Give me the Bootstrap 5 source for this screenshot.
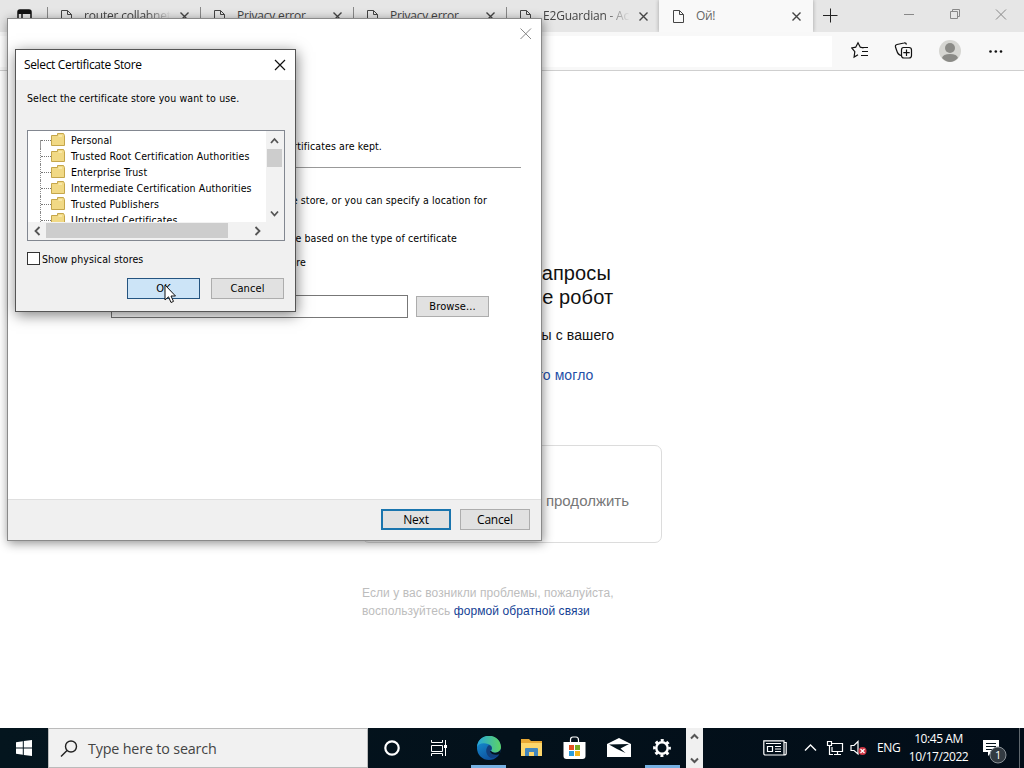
<!DOCTYPE html>
<html lang="en">
<head>
    <meta charset="utf-8">
    <title>Certificate Import Wizard</title>
    <meta name="viewport" content="width=device-width, initial-scale=1">
    <link href="https://cdn.jsdelivr.net/npm/bootstrap@5.3.0/dist/css/bootstrap.min.css" rel="stylesheet">
    <script src="https://cdn.jsdelivr.net/npm/bootstrap@5.3.0/dist/js/bootstrap.bundle.min.js"></script>
    <style>
        body {
            width: 1024px;
            height: 768px;
            font-family: "Open Sans", "Noto Sans", sans-serif;
            font-size: 12px;
            line-height: 16px;
            color: #111;
        }
        svg {
            display: block;
            flex: none;
            fill: none;
        }
        svg:not([stroke]) {
            stroke: currentColor;
        }
        /* browser */
        .tab-strip {
            height: 32px;
            background: #e6e6e6;
        }
        .tab-menu {
            width: 47px;
            padding: 9px 0 0 17px;
        }
        .edge-tab {
            width: 153px;
            height: 32px;
            padding: 0 10px 0 13px;
            color: #444;
            position: relative;
        }
        .edge-tab::before {
            content: "";
            position: absolute;
            left: 0;
            top: 7px;
            height: 17px;
            border-left: 1px solid #888;
        }
        .edge-tab .tab-label {
            width: 87px;
            margin-left: 11px;
            overflow: hidden;
            white-space: nowrap;
            letter-spacing: -.2px;
        }
        .faded {
            -webkit-mask-image: linear-gradient(90deg, #000 70%, transparent);
            mask-image: linear-gradient(90deg, #000 70%, transparent);
        }
        .edge-tab.open {
            width: 154px;
            background: #f9f9f9;
            box-shadow: 0 0 4px rgba(0, 0, 0, .3);
            clip-path: inset(0 -4px 0 -4px);
            padding-right: 11px;
        }
        .edge-tab.open::before {
            display: none;
        }
        .edge-tab.open .tab-label {
            color: #666;
            letter-spacing: -.4px;
        }
        .edge-toolbar {
            height: 39px;
            background: #f8f8f8;
            border-bottom: 1px solid #cfcfcf;
            padding-right: 21px;
        }
        .address-box {
            width: 832px;
            height: 31px;
            background: #fff;
        }
        .caption-icons {
            color: #888;
        }
        /* page */
        .captcha-page {
            height: 657px;
            background: #fff;
            font-family: "Liberation Sans", Arial, sans-serif;
            padding-left: 362px;
        }
        .captcha-col {
            width: 300px;
            padding-top: 190px;
        }
        .captcha-title {
            font-size: 20px;
            line-height: 24px;
            margin: 0 0 16px;
            font-weight: 400;
            letter-spacing: .13px;
            white-space: nowrap;
        }
        .captcha-text {
            font-size: 14px;
            line-height: 20px;
            height: 80px;
            margin: 0 0 40px;
            letter-spacing: .1px;
            white-space: nowrap;
        }
        .captcha-page a {
            color: #1f4fa8;
            text-decoration: none;
        }
        .captcha-box {
            height: 98px;
            border: 1px solid #dcdcdc;
            border-radius: 7px;
            font-size: 15px;
            color: #777;
            padding: 14px 32px 0 0;
        }
        .captcha-help {
            font-size: 12px;
            line-height: 18px;
            color: #bdbdbd;
            margin: 41px 0 0;
            letter-spacing: .07px;
            white-space: nowrap;
        }
        .captcha-page .captcha-help a {
            color: #153f95;
        }
        /* windows */
        .win {
            position: absolute;
            border: 1px solid #8a8a8a;
            font-family: "DejaVu Sans Condensed", "DejaVu Sans", sans-serif;
            font-stretch: condensed;
            font-size: 10.5px;
            line-height: 16px;
            letter-spacing: .12px;
            color: #000;
        }
        .win-wizard {
            left: 7px;
            top: 18px;
            width: 535px;
            height: 523px;
            background: #fff;
            box-shadow: 1px 2px 10px rgba(0, 0, 0, .45);
        }
        .win-store {
            left: 15px;
            top: 49px;
            width: 281px;
            height: 263px;
            background: #f0f0f0;
            border-color: #555;
            box-shadow: 1px 3px 13px rgba(0, 0, 0, .5);
        }
        .wizard-body {
            height: 480px;
        }
        .wizard-line {
            text-align: right;
            white-space: nowrap;
        }
        .line-kept {
            width: 374px;
            margin-top: 95px;
        }
        .wizard-rule {
            width: 491px;
            margin: 13px 0 24px 22px;
            border-top: 1px solid #999;
        }
        .line-store {
            width: 479px;
        }
        .line-auto {
            width: 449px;
            margin-top: 22px;
        }
        .line-place {
            width: 298px;
            margin-top: 8px;
        }
        .store-field {
            margin-top: 25px;
        }
        .store-input {
            width: 297px;
            height: 23px;
            margin-right: 8px;
            border: 1px solid #777;
            background: #fff;
        }
        .wizard-foot {
            height: 41px;
            background: #f0f0f0;
            border-top: 1px solid #dfdfdf;
            padding: 0 11px 1px 0;
            gap: 9px;
        }
        .win-btn {
            width: 73px;
            height: 21px;
            padding: 1px 0 0;
            border: 1px solid #adadad;
            background: #e1e1e1;
            color: #000;
            font-size: 11px;
            letter-spacing: .1px;
            line-height: 18px;
        }
        .wizard-foot .win-btn {
            width: 70px;
            font-family: "Open Sans", sans-serif;
            font-stretch: normal;
            font-size: 12px;
            letter-spacing: -.2px;
            padding: 0;
            line-height: 19px;
        }
        .wizard-foot .win-btn.next {
            border: 2px solid #1a75ae;
            line-height: 17px;
        }
        .win-btn.hot {
            background: #cce4f7;
            border-color: #245480;
            margin-right: 11px;
        }
        .store-title {
            height: 30px;
            background: #fff;
            font-family: "Open Sans", sans-serif;
            font-stretch: normal;
            font-size: 12px;
            letter-spacing: -.35px;
            padding: 0 9px 0 8px;
        }
        .store-body {
            padding: 10px 10px 0 11px;
        }
        .tree-box {
            height: 111px;
            margin-top: 24px;
            border: 1px solid #828790;
            background: #fff;
        }
        .tree-list {
            width: 238px;
            height: 91px;
            overflow: hidden;
            padding: 1px 0 0 12px;
        }
        .tree-row {
            height: 16px;
            white-space: nowrap;
            border-left: 1px dotted #888;
        }
        .tree-row:first-child {
            border-image: linear-gradient(transparent 50%, #999 50%) 1;
        }
        .tree-row::before {
            content: "";
            width: 10px;
            flex: none;
            border-top: 1px dotted #777;
        }
        .tree-row svg {
            margin-right: 6px;
        }
        .vbar {
            width: 18px;
            height: 91px;
            background: #f2f2f2;
            padding: 0 2px 0 0;
        }
        .vthumb {
            width: 15px;
            height: 18px;
            background: #cdcdcd;
        }
        .hbar {
            height: 18px;
            background: #f2f2f2;
            padding: 1px 0 0 1px;
        }
        .hthumb {
            width: 182px;
            height: 15px;
            background: #cdcdcd;
        }
        .show-physical {
            margin-top: 10px;
        }
        .tick-box {
            width: 13px;
            height: 13px;
            margin: 0 2px 2px 0;
            border: 1px solid #333;
            background: #fff;
        }
        .store-actions {
            margin-top: 11px;
            padding-right: 1px;
        }
        .mouse-pointer {
            position: absolute;
            left: 164px;
            top: 284px;
        }
        /* taskbar */
        .taskbar {
            height: 40px;
            background: linear-gradient(90deg, #04151e, #020d18);
            color: #fff;
        }
        .start-btn {
            width: 48px;
            flex: none;
        }
        .search-box {
            width: 320px;
            flex: none;
            background: #f1f1f1;
            border: 1px solid #bbb;
            font-size: 14.3px;
            letter-spacing: -.16px;
            color: #444;
            padding: 1px 0 0 11px;
        }
        .search-box svg {
            margin-right: 8px;
        }
        .task-list {
            padding-left: 2.3px;
        }
        .task-item {
            width: 43.4px;
            height: 40px;
            border-bottom: 3px solid transparent;
            padding-top: 2px;
            flex: none;
        }
        .task-item.running {
            width: 35px;
            margin: 0 4.2px;
            border-color: #76b0e2;
        }
        .task-item.browser {
            margin-left: 10px;
        }
        .bar-scroll {
            width: 17px;
            flex: none;
            background: #f0f0f0;
            color: #555;
            padding: 5px 0 4px;
        }
        .tray {
            padding-left: 60px;
            width: 316px;
            flex: none;
        }
        .lang-label {
            margin-left: 2px;
            letter-spacing: -.3px;
        }
        .clock {
            width: 64px;
            margin-left: 6px;
            line-height: 18px;
            letter-spacing: -.42px;
            white-space: nowrap;
        }
        .tray-end {
            border-left: 1px solid #60686e;
            width: 5px;
        }
    </style>
</head>
<body class="position-relative overflow-hidden">

    <div class="tab-strip d-flex">
        <div class="tab-menu"><svg width="16" height="15" stroke-width="1.5"><path d="M1 14V3Q1 1 3 1H12Q14 1 14 3V13H1M1 4H14M5 5V13" /><path d="M1 3H14" stroke-width="4" /></svg></div>
        <div class="edge-tab d-flex align-items-center">
            <svg width="13" height="15"><path d="M1.5 1.5H7.500L11.500 5.500V13.500H1.500ZM7.500 1.500V5.500H11.500" /></svg>
            <span class="tab-label faded">router.collabnet</span>
            <svg class="ms-auto" width="11" height="11" stroke-width="1.4"><path d="M1.500 1.500L9.500 9.500M9.500 1.500L1.500 9.500" /></svg>
        </div>
        <div class="edge-tab d-flex align-items-center">
            <svg width="13" height="15"><path d="M1.500 1.500H7.500L11.500 5.500V13.500H1.500ZM7.500 1.500V5.500H11.500" /></svg>
            <span class="tab-label">Privacy error</span>
            <svg class="ms-auto" width="11" height="11" stroke-width="1.4"><path d="M1.500 1.500L9.500 9.500M9.500 1.500L1.500 9.500" /></svg>
        </div>
        <div class="edge-tab d-flex align-items-center">
            <svg width="13" height="15"><path d="M1.500 1.500H7.500L11.500 5.500V13.500H1.500ZM7.500 1.500V5.500H11.500" /></svg>
            <span class="tab-label">Privacy error</span>
            <svg class="ms-auto" width="11" height="11" stroke-width="1.4"><path d="M1.500 1.500L9.500 9.500M9.500 1.500L1.500 9.500" /></svg>
        </div>
        <div class="edge-tab d-flex align-items-center">
            <svg width="13" height="15"><path d="M1.500 1.500H7.500L11.500 5.500V13.500H1.500ZM7.500 1.500V5.500H11.500" /></svg>
            <span class="tab-label faded">E2Guardian - Ac</span>
            <svg class="ms-auto" width="11" height="11" stroke-width="1.4"><path d="M1.500 1.500L9.500 9.500M9.500 1.500L1.500 9.500" /></svg>
        </div>
        <div class="edge-tab open d-flex align-items-center">
            <svg width="13" height="15"><path d="M1.500 1.500H7.500L11.500 5.500V13.500H1.500ZM7.500 1.500V5.500H11.500" /></svg>
            <span class="tab-label">Ой!</span>
            <svg class="ms-auto" width="11" height="11" stroke-width="1.4"><path d="M1.500 1.500L9.500 9.500M9.500 1.500L1.500 9.500" /></svg>
        </div>
        <div class="caption-icons d-flex flex-grow-1">
            <svg width="211" height="32"><path d="M10 15.500H24.500M17.500 8.500V22.500" stroke="#222" /><path d="M91 14.500H101M137.500 11.500H144.500V18.500H137.500ZM139.500 11V9.500H146.500V16.500H145M183 9.500L193 19.500M193 9.500L183 19.500" /></svg>
        </div>
    </div>

    <div class="edge-toolbar d-flex align-items-center">
        <div class="address-box"></div>
        <svg class="ms-auto" width="152" height="38" stroke="#111" stroke-width="1.2">
            <path d="M12.500 15L9.300 14.200L7 9.800L4.700 14.200L.7 15L3.800 18.600L3.100 24L7 21.700" transform="translate(0 1)" />
            <path d="M10 15.500H17M11 19.500H17M10 23.500H17" />
            <path d="M50 23.500Q47 23 45.500 18L44.500 15Q44 13 46 12.500L53 11Q55 10.500 55.500 12.500M52.500 15.500H58Q60.500 15.500 60.500 18V23.500Q60.500 26 58 26H53Q50.500 26 50.500 23.500V18Q50.500 15.500 52.500 15.500ZM55.500 17.500V24M52.300 20.700H58.700" />
            <g stroke="none"><circle cx="99" cy="19" r="11" fill="#d6d6d2" /><circle cx="99" cy="16" r="5" fill="#8b8b87" /><path d="M91 26Q92 22 99 22T107 26Q99 34 91 26" fill="#8b8b87" /></g>
            <g stroke="none" fill="#111"><circle cx="139.500" cy="19.500" r="1.300" /><circle cx="144.800" cy="19.500" r="1.300" /><circle cx="150" cy="19.500" r="1.300" /></g>
        </svg>
    </div>

    <main class="captcha-page" lang="ru">
        <div class="captcha-col">
            <h1 class="captcha-title">Подтвердите, что запросы<br>отправляли вы, а не робот</h1>
            <p class="captcha-text">Нам очень жаль, но запросы с вашего<br>устройства похожи на<br>автоматические. <a href="#">Почему это могло<br>произойти?</a></p>
            <div class="captcha-box d-flex align-items-center justify-content-end">Нажмите, чтобы продолжить</div>
            <p class="captcha-help">Если у вас возникли проблемы, пожалуйста,<br>воспользуйтесь <a href="#">формой обратной связи</a></p>
        </div>
    </main>

    <footer class="taskbar d-flex">
        <div class="start-btn d-flex align-items-center justify-content-center">
            <svg width="16" height="16" stroke="none"><path d="M0 2.200L6.800 1.200V7.500H0ZM7.800 1L16 0V7.500H7.800ZM0 8.500H6.800V14.800L0 13.800ZM7.800 8.500H16V16L7.800 15Z" fill="#fff" /></svg>
        </div>
        <div class="search-box d-flex align-items-center">
            <svg width="20" height="20" stroke="#222" stroke-width="1.400"><circle cx="11" cy="7.500" r="5.500" /><path d="M7 11.500L1 17.500" /></svg>
            <span>Type here to search</span>
        </div>
        <div class="task-list d-flex">
            <div class="task-item d-flex align-items-center justify-content-center">
                <svg width="18" height="18" stroke-width="2.200"><circle cx="9" cy="9" r="6.700" /></svg>
            </div>
            <div class="task-item d-flex align-items-center justify-content-center ms-1">
                <svg width="18" height="18"><path d="M1.500 1V3.500H12.500V1M1.500 17V14.500H12.500V17M1.500 6.500H12.500V12.500H1.500ZM15.500 1V17" /><path d="M14 6H17V9H14Z" fill="#fff" stroke="none" /></svg>
            </div>
            <div class="task-item running browser d-flex align-items-center justify-content-center">
                <svg width="24" height="24" viewBox="0 0 24 24" stroke="none">
                    <defs>
                        <linearGradient id="edgeTop"><stop stop-color="#26a5dc" /><stop offset="1" stop-color="#5dd364" /></linearGradient>
                        <linearGradient id="edgeLow" x2=".6" y2="1"><stop stop-color="#1799d8" /><stop offset="1" stop-color="#0d4d9b" /></linearGradient>
                    </defs>
                    <circle cx="12" cy="12" r="12" fill="url(#edgeLow)" />
                    <path d="M0 11C1-4 23-4 24 11C24 17 17 18 14 15C16 13 15 9 11 8C6 6 1 8 0 11Z" fill="url(#edgeTop)" />
                    <path d="M12 9C8 12 8 19 14 22C18 22 21 20 22.500 17.500C18 20 13 18 13 15C16 13 15 10 12 9Z" fill="#123f7c" />
                    <path d="M14 15C17 18 22 17 24 13L23 18C19 20 13 18 13 15Z" fill="#04131c" />
                </svg>
            </div>
            <div class="task-item d-flex align-items-center justify-content-center">
                <svg width="22" height="20" stroke="none"><path d="M0 1H8L10 3H21V18H0Z" fill="#e8a834" /><path d="M0 5H21V18H0Z" fill="#fdd66b" /><path d="M4 18V11Q4 10 5 10H16Q17 10 17 11V18H13V14H8V18Z" fill="#4286bd" /></svg>
            </div>
            <div class="task-item d-flex align-items-center justify-content-center">
                <svg width="24" height="24" stroke="none"><path d="M7.500 7V4Q7.500 1 10 1H13Q15.500 1 15.500 4V7" stroke="#fff" stroke-width="1.200" /><path d="M.5 6H22.500V20Q22.500 23 19.500 23H3.500Q.5 23 .5 20Z" fill="#fff" /><path d="M6 9H11V14H6Z" fill="#e35223" /><path d="M12 9H17V14H12Z" fill="#79ac23" /><path d="M6 15H11V20H6Z" fill="#2a9cdb" /><path d="M12 15H17V20H12Z" fill="#f2b41b" /></svg>
            </div>
            <div class="task-item d-flex align-items-center justify-content-center">
                <svg width="24" height="20" stroke="none"><path d="M0 6L12 0L24 6V19H0Z" fill="#fff" /><path d="M2 6.500L22 6L13.500 10.500L18.500 15L10 11Z" fill="#04131c" /></svg>
            </div>
            <div class="task-item running d-flex align-items-center justify-content-center">
                <svg width="20" height="20" viewBox="-10 -10 20 20"><circle r="5.700" stroke-width="2.400" /><circle r="7.600" stroke-width="2.600" stroke-dasharray="3 2.969" stroke-dashoffset="1.500" /></svg>
            </div>
        </div>
        <div class="bar-scroll d-flex flex-column align-items-center justify-content-between ms-auto">
            <svg width="9" height="7" stroke-width="2"><path d="M1 5.500L4.500 2L8 5.500" /></svg>
            <svg width="9" height="7" stroke-width="2"><path d="M1 1.500L4.500 5L8 1.500" /></svg>
        </div>
        <div class="tray d-flex align-items-center">
            <svg width="112" height="40" stroke-width="1.200">
                <path d="M.8 12.800H21V27H2.500Q.8 27 .8 25.500ZM21 14.500H23.200V25.500Q23.200 27 21 27M3 15.500H18M4.500 18.500H9.500V23.500H4.500ZM12 18.500H18M12 21H18M12 23.500H18" />
                <path d="M42 22.500L47.500 17L53 22.500" stroke-width="1.400" />
                <path d="M69 15.500H79.500V23.500H69V19M74.500 24V26.500M71 26.500H78M64.500 13.500H68.500V17.500H64.500ZM66.500 18V26.500H70" />
                <path d="M88 17.500H91L95 13.500V26L91 22.500H88Z" />
                <circle cx="99.500" cy="23" r="4" fill="#ce3442" stroke="none" /><path d="M97.500 21L101.500 25M101.500 21L97.500 25" />
            </svg>
            <span class="lang-label">ENG</span>
            <div class="clock text-center">10:45 AM<br>10/17/2022</div>
            <svg class="ms-auto" width="36" height="40">
                <path d="M0 12H16V24H9L5 28V24H0Z" fill="#fff" stroke="none" /><path d="M3 15.500H13M3 18.500H13M3 21.500H9" stroke="#04131c" />
                <circle cx="15" cy="27" r="8" fill="#333b42" stroke="#8a9197" />
                <text x="12" y="31" font-size="11" fill="#fff" stroke="none">1</text>
            </svg>
        </div>
        <div class="tray-end"></div>
    </footer>

    <div class="win win-wizard">
        <div class="wizard-body position-relative">
            <svg class="position-absolute end-0 top-0 mt-2 me-2" width="14" height="14" stroke="#888"><path d="M1.500 1.500L12 12M12 1.500L1.500 12" /></svg>
            <div class="d-flex flex-column">
                <div class="wizard-line line-kept pt-4">Certificate stores are system areas where certificates are kept.</div>
                <div class="wizard-rule"></div>
                <div class="wizard-line line-store">Windows can automatically select a certificate store, or you can specify a location for</div>
                <div class="wizard-line line-auto">Automatically select the certificate store based on the type of certificate</div>
                <div class="wizard-line line-place">Place all certificates in the following store</div>
                <div class="store-field d-flex align-items-center justify-content-end pe-5">
                    <div class="store-input"></div>
                    <button class="win-btn me-1">Browse...</button>
                </div>
            </div>
        </div>
        <div class="wizard-foot d-flex align-items-center justify-content-end">
            <button class="win-btn next">Next</button>
            <button class="win-btn">Cancel</button>
        </div>
    </div>

    <div class="win win-store">
        <div class="store-title d-flex align-items-center justify-content-between">
            <span>Select Certificate Store</span>
            <svg width="12" height="12" stroke="#111" stroke-width="1.200"><path d="M1 1L11 11M11 1L1 11" /></svg>
        </div>
        <div class="store-body">
            <div>Select the certificate store you want to use.</div>
            <div class="tree-box">
                <div class="d-flex">
                    <div class="tree-list" id="tree"></div>
                    <div class="vbar d-flex flex-column align-items-center">
                        <svg width="9" height="18" stroke="#555" stroke-width="1.800"><path d="M1 12L4.500 8L8 12" /></svg>
                        <div class="vthumb"></div>
                        <svg class="mt-auto" width="9" height="16" stroke="#555" stroke-width="1.800"><path d="M1 5.500L4.500 9.500L8 5.500" /></svg>
                    </div>
                </div>
                <div class="hbar d-flex">
                    <svg width="17" height="16" stroke="#555" stroke-width="1.800"><path d="M10.500 4L6.500 8L10.500 12" /></svg>
                    <div class="hthumb"></div>
                    <svg class="ms-4" width="12" height="16" stroke="#555" stroke-width="1.800"><path d="M3.500 4L7.500 8L3.500 12" /></svg>
                </div>
            </div>
            <label class="show-physical d-flex align-items-center"><span class="tick-box"></span>Show physical stores</label>
            <div class="store-actions d-flex justify-content-end">
                <button class="win-btn hot">OK</button>
                <button class="win-btn">Cancel</button>
            </div>
        </div>
    </div>

    <svg class="mouse-pointer" width="14" height="20"><path d="M1 1V16L4.500 12.800L7 18.500L9.500 17.400L7 12H11.500Z" fill="#fff" stroke="#111" /></svg>

    <script>
        const stores = [
            "Personal",
            "Trusted Root Certification Authorities",
            "Enterprise Trust",
            "Intermediate Certification Authorities",
            "Trusted Publishers",
            "Untrusted Certificates"
        ];
        const folder = '<svg width="14" height="14"><path d="M.5 2.500H6.500V.5H12.500L13.500 2.500V12.500H.5Z" fill="#f1d985" stroke="#c5a64b"/><path d="M7.500 3H11" stroke="#fff5c8"/></svg>';

        document.getElementById("tree").innerHTML = stores.map(name =>
            `<div class="tree-row d-flex align-items-center">${folder}<span>${name}</span></div>`
        ).join("");
    </script>

</body>
</html>
